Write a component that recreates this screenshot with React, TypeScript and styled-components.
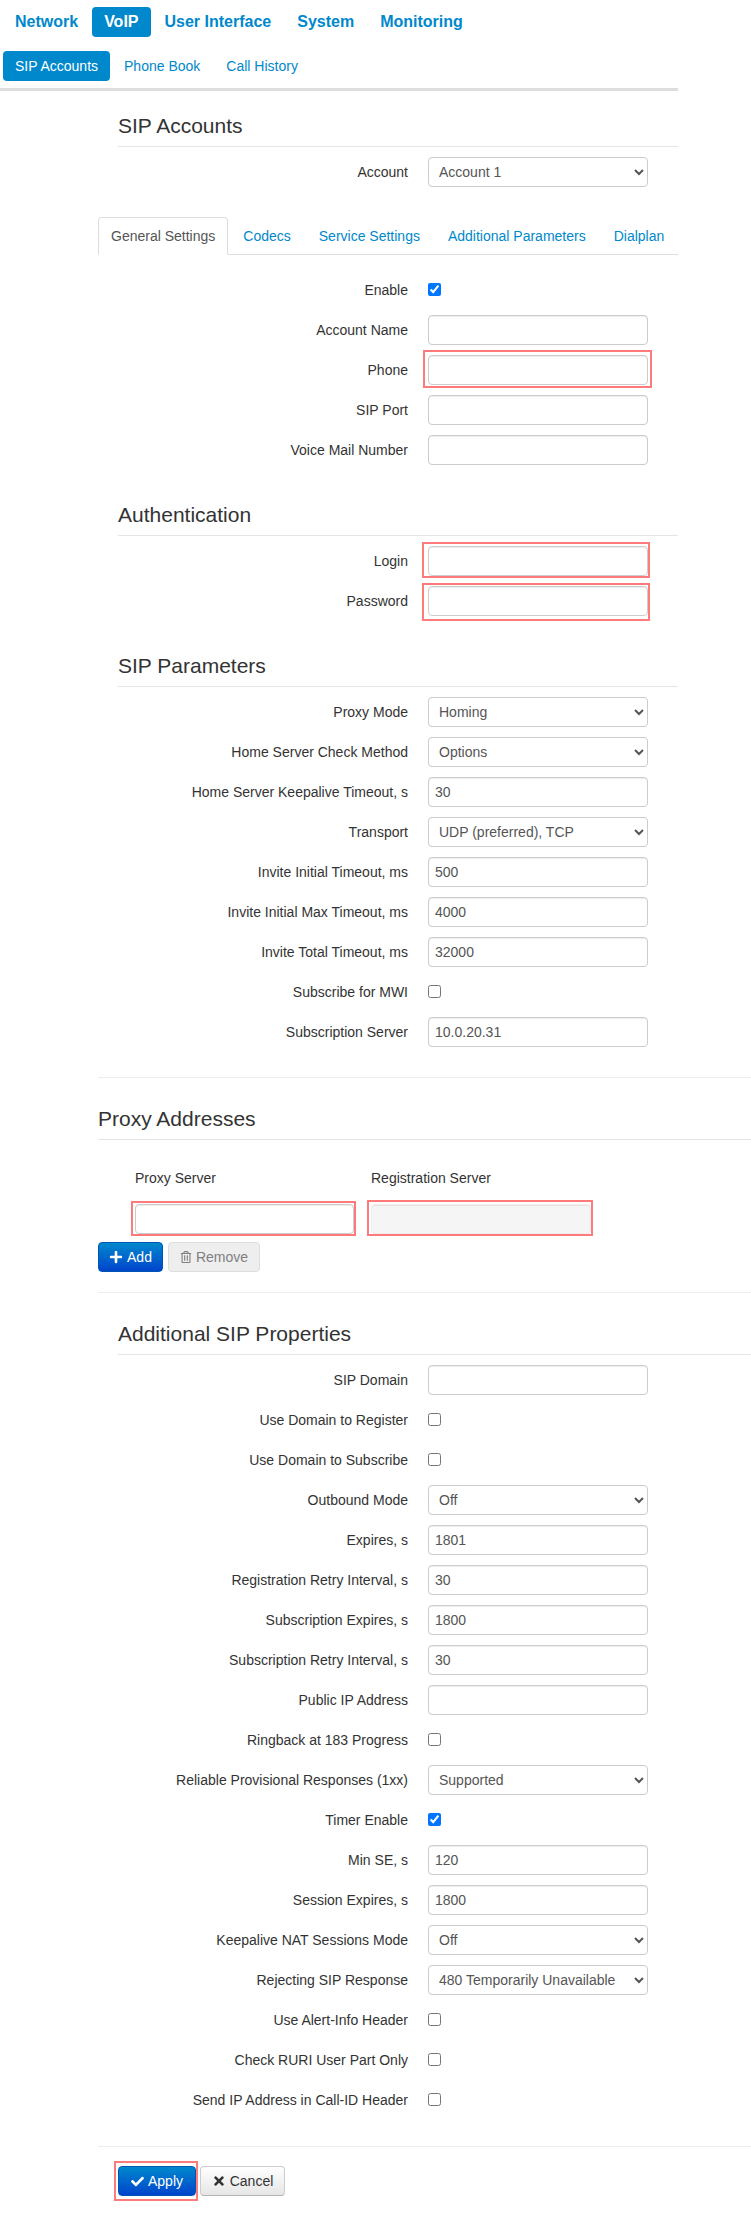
import React from 'react';
import styled, { createGlobalStyle } from 'styled-components';
import { FaCheck, FaPlus, FaRegTrashAlt, FaTimes } from 'react-icons/fa';

type Mark = [number, number, number, number];

type RowData =
  | { kind: 'text'; label: string; value?: string; mark?: Mark }
  | { kind: 'select'; label: string; value: string; options?: string[] }
  | { kind: 'check'; label: string; checked?: boolean };

const colors = {
  link: '#0088cc',
  text: '#333333',
  line: '#e5e5e5',
  mark: '#ff7b7b',
};

const GlobalStyle = createGlobalStyle`
  html, body {
    margin: 0;
    padding: 0;
    background: #fff;
    overflow-x: hidden;
  }
  body {
    font-family: "Liberation Sans", Arial, sans-serif;
    font-size: 14px;
    color: ${colors.text};
  }
`;

const Page = styled.div`
  width: 751px;
  height: 2240px;
  overflow: hidden;
`;

const PillBar = styled.nav<{ $top: number }>`
  display: flex;
  padding: ${(p) => p.$top}px 0 0 3px;
`;

const Pill = styled.a<{ $active?: boolean; $main?: boolean }>`
  display: block;
  height: 30px;
  line-height: 30px;
  padding: 0 12px;
  margin-right: 2px;
  border-radius: 4px;
  font-size: ${(p) => (p.$main ? 16 : 14)}px;
  font-weight: ${(p) => (p.$main ? 700 : 400)};
  color: ${(p) => (p.$active ? '#fff' : colors.link)};
  background: ${(p) => (p.$active ? colors.link : 'transparent')};
`;

const NavRule = styled.div`
  width: 678px;
  height: 3px;
  margin-top: 7px;
  background: #dddddd;
`;

const Content = styled.main`
  padding-left: 98px;
`;

const Legend = styled.h2<{ $top: number; $flush?: boolean; $wide?: boolean }>`
  margin: ${(p) => p.$top}px 0 10px ${(p) => (p.$flush ? 0 : 20)}px;
  width: ${(p) => (p.$wide ? (p.$flush ? 653 : 633) : 560)}px;
  height: 30px;
  line-height: 30px;
  padding-bottom: 5px;
  border-bottom: 1px solid ${colors.line};
  font-size: 21px;
  font-weight: 400;
  color: ${colors.text};
`;

const Rows = styled.div`
  display: flex;
  flex-direction: column;
  gap: 10px;
`;

const Row = styled.div`
  display: flex;
  height: 30px;
`;

const RowLabel = styled.label`
  width: 310px;
  margin-right: 20px;
  line-height: 30px;
  text-align: right;
  white-space: nowrap;
  color: ${colors.text};
`;

const Field = styled.div<{ $width?: number }>`
  position: relative;
  width: ${(p) => p.$width ?? 220}px;
  height: 30px;
`;

const TextInput = styled.input`
  display: block;
  box-sizing: border-box;
  width: 100%;
  height: 30px;
  padding: 4px 6px;
  border: 1px solid #cccccc;
  border-radius: 4px;
  box-shadow: inset 0 1px 1px rgba(0, 0, 0, 0.075);
  background: #fff;
  font: 14px "Liberation Sans", Arial, sans-serif;
  color: #555555;
  outline: none;

  &:disabled {
    background: #f5f5f5;
    border-color: #eeeeee;
  }
`;

const SelectInput = styled.select`
  display: block;
  box-sizing: border-box;
  width: 100%;
  height: 30px;
  padding: 4px 6px;
  border: 1px solid #cccccc;
  border-radius: 4px;
  background: #fff;
  font: 14px "Liberation Sans", Arial, sans-serif;
  color: #555555;
  outline: none;
`;

const CheckInput = styled.input`
  display: block;
  width: 13px;
  height: 13px;
  margin: 8px 0 0;
`;

// red annotation frame drawn over a control
const Highlight = styled.span<{ $box: Mark }>`
  position: absolute;
  top: ${(p) => p.$box[0]}px;
  right: ${(p) => p.$box[1]}px;
  bottom: ${(p) => p.$box[2]}px;
  left: ${(p) => p.$box[3]}px;
  border: 2px solid ${colors.mark};
  pointer-events: none;
`;

const TabBar = styled.div`
  display: flex;
  width: 580px;
  height: 37px;
  margin: 30px 0 20px;
  border-bottom: 1px solid #dddddd;
`;

const Tab = styled.a<{ $active?: boolean }>`
  box-sizing: border-box;
  height: ${(p) => (p.$active ? 38 : 37)}px;
  line-height: 36px;
  padding: 0 12px;
  margin-right: 2px;
  white-space: nowrap;
  border: 1px solid ${(p) => (p.$active ? '#dddddd' : 'transparent')};
  border-bottom-color: ${(p) => (p.$active ? '#fff' : 'transparent')};
  border-radius: 4px 4px 0 0;
  background: #fff;
  color: ${(p) => (p.$active ? '#555555' : colors.link)};
`;

const Divider = styled.hr<{ $top: number }>`
  width: 653px;
  height: 1px;
  margin: ${(p) => p.$top}px 0 0;
  border: 0;
  background: #eeeeee;
`;

const ProxyGrid = styled.div`
  display: grid;
  grid-template-columns: 219px 220px;
  column-gap: 17px;
  margin: 23px 0 0 37px;
`;

const ProxyHead = styled.div`
  height: 30px;
  line-height: 30px;
  margin-bottom: 11px;
`;

const ButtonRow = styled.div<{ $top: number; $left?: number; $gap: number }>`
  display: flex;
  gap: ${(p) => p.$gap}px;
  margin: ${(p) => p.$top}px 0 0 ${(p) => p.$left ?? 0}px;
`;

const Button = styled.button<{ $variant: 'primary' | 'plain' | 'off'; $width: number; $icon: number }>`
  position: relative;
  display: flex;
  align-items: center;
  justify-content: center;
  gap: 4px;
  box-sizing: border-box;
  width: ${(p) => p.$width}px;
  height: 30px;
  padding: 0;
  border-radius: 4px;
  font: 14px "Liberation Sans", Arial, sans-serif;
  border: 1px solid
    ${(p) => (p.$variant === 'primary' ? '#0055b3' : p.$variant === 'plain' ? '#cccccc' : '#dddddd')};
  border-bottom-color: ${(p) => (p.$variant === 'plain' ? '#b3b3b3' : undefined)};
  color: ${(p) => (p.$variant === 'primary' ? '#fff' : p.$variant === 'plain' ? '#333333' : '#808080')};
  background: ${(p) =>
    p.$variant === 'primary'
      ? 'linear-gradient(to bottom, #0088cc, #0044cc)'
      : p.$variant === 'plain'
      ? 'linear-gradient(to bottom, #ffffff, #e6e6e6)'
      : '#eeeeee'};

  svg {
    width: auto;
    height: ${(p) => p.$icon}px;
    flex: none;
  }
`;

const accountRows: RowData[] = [{ kind: 'select', label: 'Account', value: 'Account 1' }];

const generalRows: RowData[] = [
  { kind: 'check', label: 'Enable', checked: true },
  { kind: 'text', label: 'Account Name' },
  { kind: 'text', label: 'Phone', mark: [-5, -4, -3, -5] },
  { kind: 'text', label: 'SIP Port' },
  { kind: 'text', label: 'Voice Mail Number' },
];

const authRows: RowData[] = [
  { kind: 'text', label: 'Login', mark: [-4, -2, -2, -6] },
  { kind: 'text', label: 'Password', mark: [-3, -2, -5, -6] },
];

const sipRows: RowData[] = [
  { kind: 'select', label: 'Proxy Mode', value: 'Homing', options: ['Off', 'Parking', 'Homing'] },
  { kind: 'select', label: 'Home Server Check Method', value: 'Options', options: ['Invite', 'Options'] },
  { kind: 'text', label: 'Home Server Keepalive Timeout, s', value: '30' },
  { kind: 'select', label: 'Transport', value: 'UDP (preferred), TCP', options: ['UDP (preferred), TCP', 'TCP (preferred), UDP'] },
  { kind: 'text', label: 'Invite Initial Timeout, ms', value: '500' },
  { kind: 'text', label: 'Invite Initial Max Timeout, ms', value: '4000' },
  { kind: 'text', label: 'Invite Total Timeout, ms', value: '32000' },
  { kind: 'check', label: 'Subscribe for MWI' },
  { kind: 'text', label: 'Subscription Server', value: '10.0.20.31' },
];

const extraRows: RowData[] = [
  { kind: 'text', label: 'SIP Domain' },
  { kind: 'check', label: 'Use Domain to Register' },
  { kind: 'check', label: 'Use Domain to Subscribe' },
  { kind: 'select', label: 'Outbound Mode', value: 'Off', options: ['Off', 'Outbound'] },
  { kind: 'text', label: 'Expires, s', value: '1801' },
  { kind: 'text', label: 'Registration Retry Interval, s', value: '30' },
  { kind: 'text', label: 'Subscription Expires, s', value: '1800' },
  { kind: 'text', label: 'Subscription Retry Interval, s', value: '30' },
  { kind: 'text', label: 'Public IP Address' },
  { kind: 'check', label: 'Ringback at 183 Progress' },
  { kind: 'select', label: 'Reliable Provisional Responses (1xx)', value: 'Supported', options: ['Supported', 'Required'] },
  { kind: 'check', label: 'Timer Enable', checked: true },
  { kind: 'text', label: 'Min SE, s', value: '120' },
  { kind: 'text', label: 'Session Expires, s', value: '1800' },
  { kind: 'select', label: 'Keepalive NAT Sessions Mode', value: 'Off', options: ['Off', 'On'] },
  { kind: 'select', label: 'Rejecting SIP Response', value: '480 Temporarily Unavailable', options: ['480 Temporarily Unavailable', '486 Busy Here'] },
  { kind: 'check', label: 'Use Alert-Info Header' },
  { kind: 'check', label: 'Check RURI User Part Only' },
  { kind: 'check', label: 'Send IP Address in Call-ID Header' },
];

const FormRows = ({ rows }: { rows: RowData[] }) => (
  <Rows>
    {rows.map((row) => (
      <Row key={row.label}>
        <RowLabel>{row.label}</RowLabel>
        <Field>
          {row.kind === 'text' && <TextInput type="text" defaultValue={row.value} />}
          {row.kind === 'select' && (
            <SelectInput defaultValue={row.value}>
              {(row.options ?? [row.value]).map((o) => (
                <option key={o}>{o}</option>
              ))}
            </SelectInput>
          )}
          {row.kind === 'check' && <CheckInput type="checkbox" defaultChecked={row.checked} />}
          {row.kind === 'text' && row.mark && <Highlight $box={row.mark} />}
        </Field>
      </Row>
    ))}
  </Rows>
);

export default function App() {
  return (
    <Page>
      <GlobalStyle />
      <PillBar $top={7}>
        <Pill $main>Network</Pill>
        <Pill $main $active>VoIP</Pill>
        <Pill $main>User Interface</Pill>
        <Pill $main>System</Pill>
        <Pill $main>Monitoring</Pill>
      </PillBar>
      <PillBar $top={14}>
        <Pill $active>SIP Accounts</Pill>
        <Pill>Phone Book</Pill>
        <Pill>Call History</Pill>
      </PillBar>
      <NavRule />
      <Content>
        <Legend $top={20}>SIP Accounts</Legend>
        <FormRows rows={accountRows} />
        <TabBar>
          <Tab $active>General Settings</Tab>
          <Tab>Codecs</Tab>
          <Tab>Service Settings</Tab>
          <Tab>Additional Parameters</Tab>
          <Tab>Dialplan</Tab>
        </TabBar>
        <FormRows rows={generalRows} />
        <Legend $top={35}>Authentication</Legend>
        <FormRows rows={authRows} />
        <Legend $top={35}>SIP Parameters</Legend>
        <FormRows rows={sipRows} />
        <Divider $top={30} />
        <Legend $top={26} $flush $wide>Proxy Addresses</Legend>
        <ProxyGrid>
          <ProxyHead>Proxy Server</ProxyHead>
          <ProxyHead>Registration Server</ProxyHead>
          <Field $width={219}>
            <TextInput type="text" />
            <Highlight $box={[-3, -2, -2, -4]} />
          </Field>
          <Field>
            <TextInput type="text" disabled />
            <Highlight $box={[-4, -2, -2, -4]} />
          </Field>
        </ProxyGrid>
        <ButtonRow $top={8} $gap={5}>
          <Button $variant="primary" $width={65} $icon={14}>
            <FaPlus />
            Add
          </Button>
          <Button $variant="off" $width={92} $icon={12} disabled>
            <FaRegTrashAlt />
            Remove
          </Button>
        </ButtonRow>
        <Divider $top={20} />
        <Legend $top={26} $wide>Additional SIP Properties</Legend>
        <FormRows rows={extraRows} />
        <Divider $top={31} />
        <ButtonRow $top={19} $left={20} $gap={4}>
          <Button $variant="primary" $width={78} $icon={13}>
            <FaCheck />
            Apply
            <Highlight $box={[-6, -3, -6, -5]} />
          </Button>
          <Button $variant="plain" $width={85} $icon={14}>
            <FaTimes />
            Cancel
          </Button>
        </ButtonRow>
      </Content>
    </Page>
  );
}
